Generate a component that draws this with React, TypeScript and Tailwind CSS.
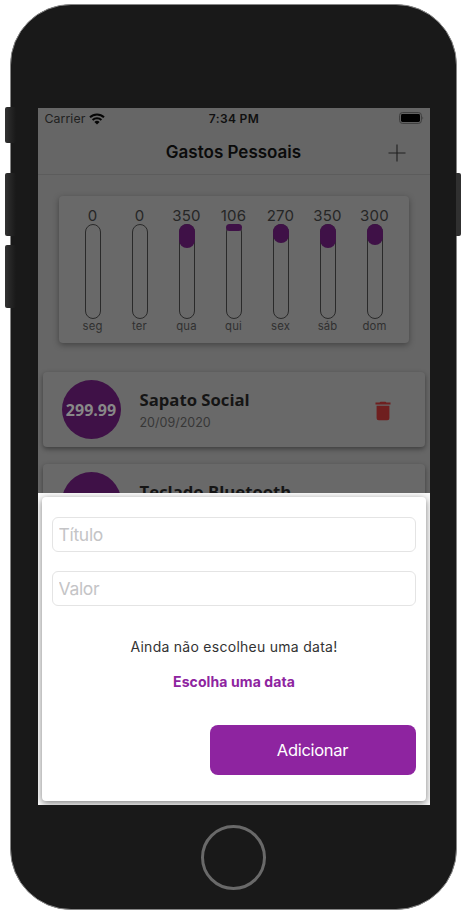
import React from "react";

const days = [
  { label: "seg", value: "0", fill: 0 },
  { label: "ter", value: "0", fill: 0 },
  { label: "qua", value: "350", fill: 24 },
  { label: "qui", value: "106", fill: 7 },
  { label: "sex", value: "270", fill: 19 },
  { label: "sáb", value: "350", fill: 24 },
  { label: "dom", value: "300", fill: 21 },
];

function StatusBar() {
  return (
    <div className="grid h-[22px] shrink-0 grid-cols-3 items-center pr-[6px] pl-[7px] text-[12px] text-[#101010]">
      <div className="flex items-center gap-[4px]">
        <span className="text-[12.3px] tracking-[0.08px] text-[#202020]">Carrier</span>
        <svg width="16" height="12" viewBox="0 0 16 12" fill="none" stroke="#050505">
          <path d="M1 4.3A10 10 0 0 1 15 4.3" strokeWidth="2" />
          <path d="M3.6 7A6.4 6.4 0 0 1 12.4 7" strokeWidth="1.9" />
          <path d="M8 11.6 5.4 9A3.8 3.8 0 0 1 10.6 9Z" fill="#050505" stroke="none" />
        </svg>
      </div>
      <span className="text-center text-[12px] font-semibold tracking-[0.35px] whitespace-nowrap">7:34 PM</span>
      <svg className="-mt-[2px] justify-self-end" width="25" height="12" viewBox="0 0 25 12">
        <rect x=".6" y=".6" width="21.8" height="10.8" rx="2.8" fill="none" stroke="#3c3c3c" />
        <rect x="2" y="2" width="19" height="8" rx="1.4" fill="#000" />
        <path d="M23.5 4.2Q25 6 23.5 7.8Z" fill="#3c3c3c" />
      </svg>
    </div>
  );
}

function Header() {
  return (
    <div className="grid h-[45px] shrink-0 grid-cols-[60px_1fr_60px] items-center border-b border-[#5c5c5c]">
      <span />
      <h1 className="pt-[2px] text-center text-[17px] font-semibold whitespace-nowrap text-[#0b0b0b]">
        Gastos Pessoais
      </h1>
      <svg className="mt-[2px] ml-[18px]" width="18" height="18" viewBox="0 0 18 18" stroke="#202020" strokeWidth="1.1">
        <path d="M9 .5V17.5M.5 9H17.5" />
      </svg>
    </div>
  );
}

function Chart() {
  return (
    <div className="mx-[21px] mt-[21px] flex h-[147px] shrink-0 justify-center rounded-[4px] bg-[#696969] pt-[10px] shadow-[0_2px_6px_rgba(0,0,0,0.35)]">
      {days.map((d) => (
        <div key={d.label} className="flex w-[47px] flex-col items-center">
          <span className="h-[18px] text-[15px] leading-[19px] tracking-[0.2px] text-[#262626]">{d.value}</span>
          <div className="h-[95px] w-4 rounded-[8px] border border-[#2a2a2a]">
            <div className="-mx-px -mt-px bg-[#3f1147]" style={{ height: d.fill, borderRadius: Math.min(8, d.fill / 2) }} />
          </div>
          <span className="h-[14px] text-[11.3px] leading-[15px] tracking-[0.15px] text-[#303030]">{d.label}</span>
        </div>
      ))}
    </div>
  );
}

function Transaction({ price, title, date }: { price: string; title: string; date: string }) {
  return (
    <div className="mx-[5px] flex h-[75px] shrink-0 items-center rounded-[4px] bg-[#696969] pr-[34px] pl-[19px] shadow-[0_2px_5px_rgba(0,0,0,0.4)]">
      <div className="flex size-[59px] shrink-0 items-center justify-center rounded-full bg-[#3f1147] font-['Open_Sans','Noto_Sans',sans-serif] text-[16px] font-bold text-[#888888]">
        {price}
      </div>
      <div className="ml-[19px] flex-1">
        <div className="font-['Open_Sans','Noto_Sans',sans-serif] text-[16.7px] leading-[23px] font-bold whitespace-nowrap text-[#151515]">
          {title}
        </div>
        <div className="-mb-[2px] pt-[2px] text-[12.5px] leading-[20px] text-[#373737]">{date}</div>
      </div>
      <svg className="mt-[2px]" width="16" height="20" viewBox="0 0 16 20" fill="#6f1f1f">
        <path d="M.5 1.5H4.5L5.5.7H10.5L11.5 1.5H15.5V3.6H.5ZM1.6 4.7H14.4V17.2Q14.4 19.2 12.3 19.2H3.7Q1.6 19.2 1.6 17.2Z" />
      </svg>
    </div>
  );
}

function FormSheet() {
  return (
    <div className="h-[312px] shrink-0 overflow-hidden bg-[#fbfbfb] px-1 pt-1">
      <div className="flex h-[304px] flex-col rounded-[4px] bg-white px-[10px] pt-5 shadow-[0_2px_7px_rgba(0,0,0,0.5)]">
        <input
          placeholder="Título"
          className="h-[35px] w-full rounded-[6px] border border-[#e4e4e4] bg-white px-[6px] text-[17.5px] tracking-[-0.3px] placeholder:text-[#c4c4c6]"
        />
        <input
          placeholder="Valor"
          className="mt-[19px] h-[35px] w-full rounded-[6px] border border-[#e4e4e4] bg-white px-[6px] text-[17.5px] tracking-[-0.3px] placeholder:text-[#c4c4c6]"
        />
        <p className="mt-[31px] pl-px text-center text-[14px] leading-5 tracking-[0.27px] text-[#333]">Ainda não escolheu uma data!</p>
        <button className="mt-[15px] pl-px text-center text-[14px] leading-5 font-bold tracking-[0.1px] text-[#8e24a0]">Escolha uma data</button>
        <button className="mt-[33px] h-[50px] w-[206px] self-end rounded-[8px] bg-[#8e24a0] text-[16.5px] tracking-[-0.3px] text-white">
          Adicionar
        </button>
      </div>
    </div>
  );
}

export default function App() {
  return (
    <div className="h-[911px] w-[467px] overflow-hidden bg-white pt-1 pl-[10px] font-['Inter','Noto_Sans',sans-serif]">
      <div className="relative flex h-[906px] w-[447px] flex-col items-center rounded-[61px] border border-[#858585] bg-[#191919] pt-[103px]">
        <i className="absolute top-[102px] -left-[6px] h-[36px] w-[11px] rounded-[2px] bg-linear-to-r from-[#333] via-[#252525] to-[#191919]" />
        <i className="absolute top-[168px] -left-[6px] h-[63px] w-[11px] rounded-[2px] bg-linear-to-r from-[#333] via-[#252525] to-[#191919]" />
        <i className="absolute top-[240px] -left-[6px] h-[63px] w-[11px] rounded-[2px] bg-linear-to-r from-[#333] via-[#252525] to-[#191919]" />
        <i className="absolute top-[168px] -right-[5px] h-[63px] w-[5px] rounded-r-[2px] bg-[#303030]" />
        <div className="flex h-[697px] w-[392px] flex-col overflow-hidden bg-[#666]">
          <div className="flex h-[385px] shrink-0 flex-col overflow-hidden">
            <StatusBar />
            <Header />
            <Chart />
            <div className="mt-[29px] flex shrink-0 flex-col gap-[17px]">
              <Transaction price="299.99" title="Sapato Social" date="20/09/2020" />
              <Transaction price="199.99" title="Teclado Bluetooth" date="20/09/2020" />
            </div>
          </div>
          <FormSheet />
        </div>
        <div className="mt-5 size-[65px] shrink-0 rounded-full border-[3px] border-[#696969]" />
      </div>
    </div>
  );
}
